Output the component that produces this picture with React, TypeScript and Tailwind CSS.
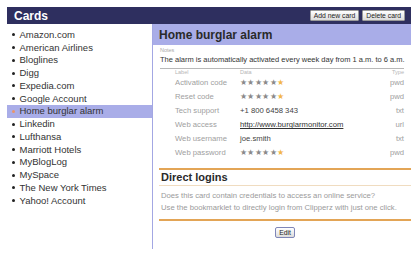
import React from "react";

const cards = [
  "Amazon.com",
  "American Airlines",
  "Bloglines",
  "Digg",
  "Expedia.com",
  "Google Account",
  "Home burglar alarm",
  "Linkedin",
  "Lufthansa",
  "Marriott Hotels",
  "MyBlogLog",
  "MySpace",
  "The New York Times",
  "Yahoo! Account",
];

type Row = { label: string; data: React.ReactNode; type: string };

const Stars = () => (
  <span className="text-[7.5px] tracking-[0.4px]">
    <span className="text-[#8a8a8a]">★★★★★</span>
    <span className="text-[#f2b64a]">★</span>
  </span>
);

const rows: Row[] = [
  { label: "Activation code", data: <Stars />, type: "pwd" },
  { label: "Reset code", data: <Stars />, type: "pwd" },
  { label: "Tech support", data: "+1 800 6458 343", type: "txt" },
  {
    label: "Web access",
    data: <span className="underline text-[#333]">http://www.burglarmonitor.com</span>,
    type: "url",
  },
  { label: "Web username", data: "joe.smith", type: "txt" },
  { label: "Web password", data: <Stars />, type: "pwd" },
];

export default function App() {
  return (
    <div
      className="w-[420px] h-[254px] bg-white overflow-hidden pt-[7px] px-[7px]"
      style={{ fontFamily: '"Liberation Sans", Arial, sans-serif' }}
    >
      <div className="w-[404px]">
        <div className="h-[17px] bg-[#2e2f5f] flex items-center justify-between pl-[7px] pr-[6px]">
          <span className="text-white font-bold text-[12px] leading-none">Cards</span>
          <div className="flex gap-[3px]">
            <button className="h-[11px] px-[3px] bg-gradient-to-b from-[#ffffff] to-[#dcdcdc] border border-[#9a9a9a] rounded-[1px] text-[6.8px] leading-[9px] text-[#222]">
              Add new card
            </button>
            <button className="h-[11px] px-[3px] bg-gradient-to-b from-[#ffffff] to-[#dcdcdc] border border-[#9a9a9a] rounded-[1px] text-[6.8px] leading-[9px] text-[#222]">
              Delete card
            </button>
          </div>
        </div>
        <div className="flex">
          <ul className="w-[145px] shrink-0 pt-[4.5px]">
            {cards.map((c) => {
              const sel = c === "Home burglar alarm";
              return (
                <li
                  key={c}
                  className={`h-[12.75px] flex items-center pl-[5px] text-[9.5px] text-[#333] ${
                    sel ? "bg-[#a9ade8]" : ""
                  }`}
                >
                  <span
                    className={`w-[3px] h-[3px] rounded-full mr-[4.5px] ${
                      sel ? "bg-[#e9946a]" : "bg-[#222]"
                    }`}
                  />
                  {c}
                </li>
              );
            })}
          </ul>
          <div className="flex-1 min-w-0 h-[225px] border-l-[1.5px] border-[#a3a7e3]">
            <div className="h-[21px] bg-[#a9ade8] flex items-center pl-[6px]">
              <span className="font-bold text-[12px] text-[#2a2a2a]">Home burglar alarm</span>
            </div>
            <div className="pl-[7px] pr-[7px]">
              <div className="text-[5.5px] text-[#aaa] mt-[2px] leading-[7px]">Notes</div>
              <div className="text-[7.5px] text-[#333] leading-[12px] pb-[2px] border-b border-[#b8b8b8] whitespace-nowrap">
                The alarm is automatically activated every week day from 1 a.m. to 6 a.m.
              </div>
              <div className="pl-[15px]">
                <div className="flex text-[5.5px] text-[#b5b5b5] leading-[7px]">
                  <span className="w-[65px]">Label</span>
                  <span className="flex-1">Data</span>
                  <span>Type</span>
                </div>
                {rows.map((r) => (
                  <div key={r.label} className="flex items-center h-[14px] text-[7.7px]">
                    <span className="w-[65px] text-[#a0a0a0]">{r.label}</span>
                    <span className="flex-1 text-[#444]">{r.data}</span>
                    <span className="text-[#a0a0a0]">{r.type}</span>
                  </div>
                ))}
              </div>
            </div>
            <div className="ml-[6px] mt-[8px] border-t-[2px] border-[#e3a556]">
              <div className="pl-[2px] h-[16px] flex items-center border-b border-[#f0dcc0]">
                <span className="font-bold text-[11px] text-[#2a2a2a]">Direct logins</span>
              </div>
              <div className="pl-[2px] pt-[4px] text-[7.7px] text-[#9a9a9a] leading-[11.5px] whitespace-nowrap">
                <div>Does this card contain credentials to access an online service?</div>
                <div>Use the bookmarklet to directly login from Clipperz with just one click.</div>
              </div>
              <div className="mt-[6px] border-t-[2px] border-[#e3a556]" />
              <div className="flex justify-center pt-[6px]">
                <button className="h-[11px] px-[3px] bg-gradient-to-b from-[#ffffff] to-[#dcdcdc] border border-[#7f86b8] rounded-[2px] text-[6.8px] leading-[9px] text-[#222]">
                  Edit
                </button>
              </div>
            </div>
          </div>
        </div>
      </div>
    </div>
  );
}
